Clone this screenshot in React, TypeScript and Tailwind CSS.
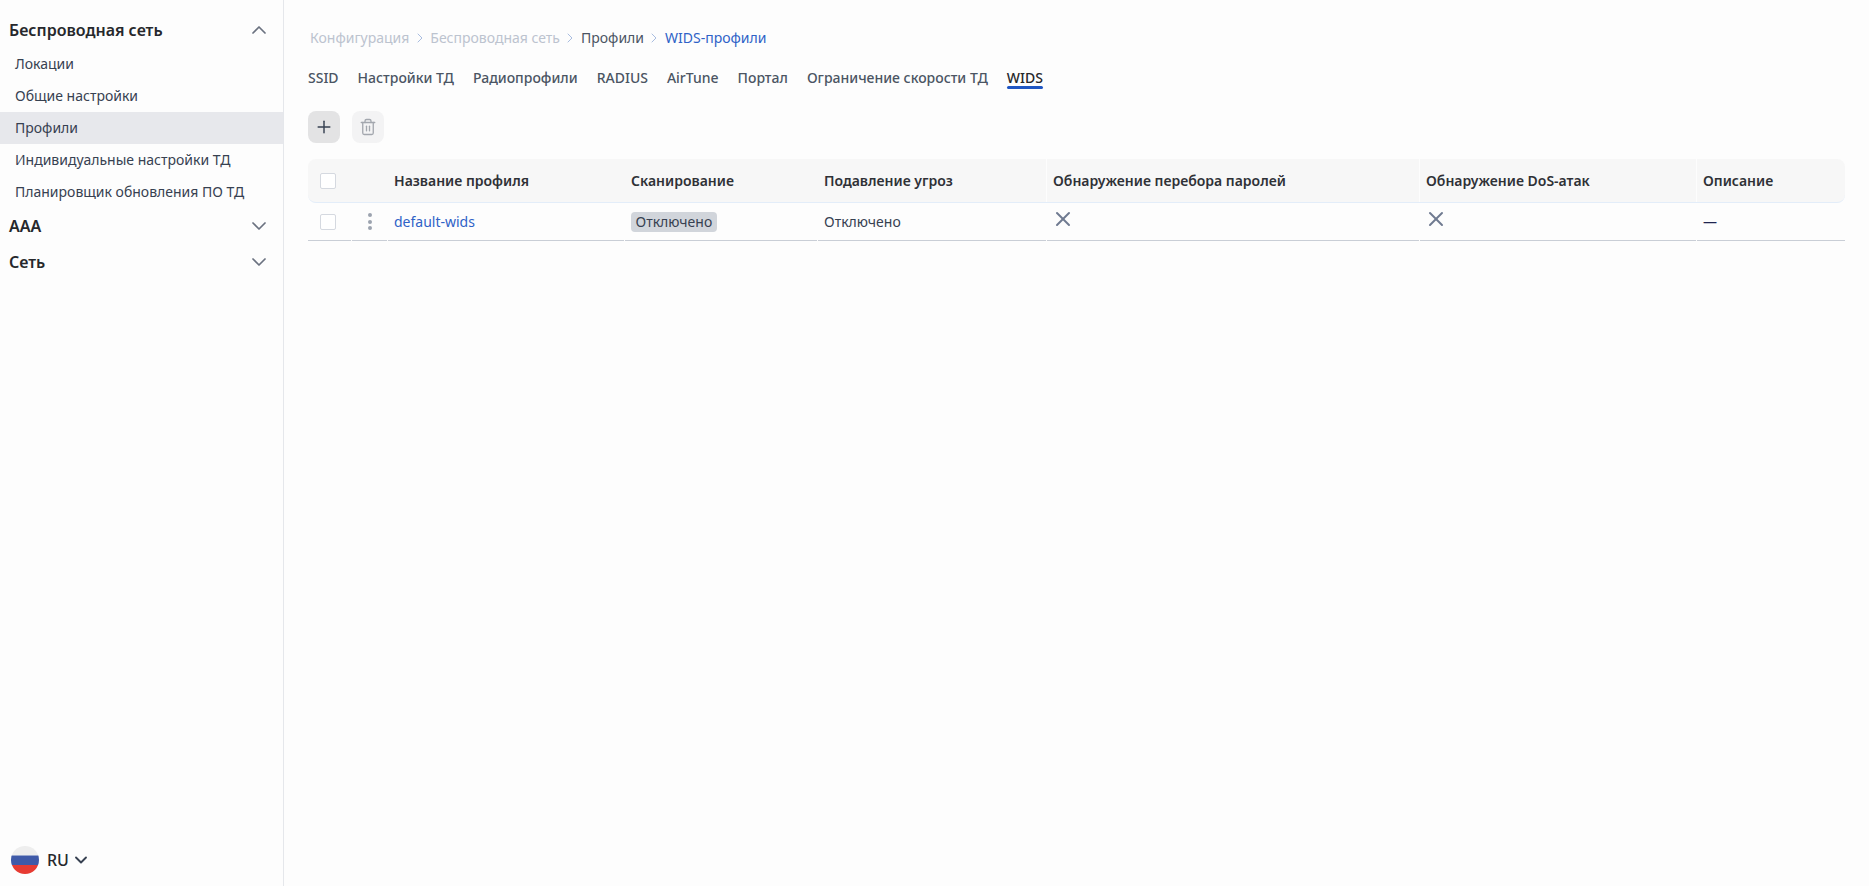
import { ChevronDown, ChevronUp, ChevronRight, Plus, Trash2, X } from "lucide-react";

const font = { fontFamily: '"Noto Sans", sans-serif' };

const items = ["Локации", "Общие настройки", "Профили", "Индивидуальные настройки ТД", "Планировщик обновления ПО ТД"];
const tabs = ["SSID", "Настройки ТД", "Радиопрофили", "RADIUS", "AirTune", "Портал", "Ограничение скорости ТД"];
const cols = "grid grid-cols-[43px_36px_237px_193px_229px_373px_277px_149px]";

function Check() {
  return <span className="block w-4 h-4 rounded-[2px] border border-[#d5d9e0] bg-white" />;
}

function Head({ children, first }: { children?: React.ReactNode; first?: boolean }) {
  return (
    <div className={`flex items-center text-sm font-semibold text-[#2f3136] ${first ? "pl-[7px]" : "pl-[6px] border-l border-[#fdfdfd]"}`}>
      {children}
    </div>
  );
}

function Cell({ children, first }: { children?: React.ReactNode; first?: boolean }) {
  return (
    <div className={`flex items-center text-sm text-[#374151] border-b border-[#c9ced6] ${first ? "pl-[7px]" : "ml-px pl-[6px]"}`}>
      {children}
    </div>
  );
}

function Group({ title, open }: { title: string; open?: boolean }) {
  const Icon = open ? ChevronUp : ChevronDown;
  return (
    <div className="h-9 pl-[9px] pr-3 flex items-center justify-between">
      <span className="text-base font-semibold text-[#26282c]">{title}</span>
      <Icon className="w-6 h-6 text-[#6b7280]" strokeWidth={1.75} />
    </div>
  );
}

function Sep() {
  return <ChevronRight className="w-4 h-4 mx-[2.5px] text-[#a9bde0]" strokeWidth={1.5} />;
}

function Dot() {
  return <span className="w-1 h-1 rounded-full bg-[#9ca3af] block" />;
}

function Cross() {
  return <X className="w-6 h-6 -mt-[5px] -ml-[2px] text-[#6f7a90]" strokeWidth={2} />;
}

export default function App() {
  return (
    <div style={font} className="flex h-[886px] bg-[#fdfdfd]">
      <aside className="w-[284px] shrink-0 border-r border-[#e5e7eb] pt-3 flex flex-col justify-between">
        <div>
          <Group title="Беспроводная сеть" open />
          {items.map((t) => (
            <div
              key={t}
              className={`h-8 pl-[15px] flex items-center text-sm text-[#374151] ${t === "Профили" ? "bg-[#e7e8ec]" : ""}`}
            >
              {t}
            </div>
          ))}
          <Group title="AAA" />
          <Group title="Сеть" />
        </div>
        <div className="flex items-center pl-[11px] pb-[11px] h-[42px] gap-2">
          <svg width="28" height="28" viewBox="0 0 28 28" className="shrink-0">
            <defs>
              <clipPath id="flag">
                <circle cx="14" cy="14" r="14" />
              </clipPath>
            </defs>
            <g clipPath="url(#flag)">
              <rect width="28" height="9.5" fill="#eeeeee" />
              <rect y="9.5" width="28" height="9.5" fill="#3f5aa8" />
              <rect y="19" width="28" height="9" fill="#e73b32" />
            </g>
          </svg>
          <span className="text-base font-medium text-[#26282c]">RU</span>
          <ChevronDown className="w-5 h-5 -ml-[6px] text-[#374151]" strokeWidth={2.25} />
        </div>
      </aside>
      <main className="flex-1 pl-6 pr-6 pt-[28px]">
        <nav className="flex items-center h-5 pl-[2px] text-sm">
          <span className="text-[#bcc3cf]">Конфигурация</span>
          <Sep />
          <span className="text-[#bcc3cf]">Беспроводная сеть</span>
          <Sep />
          <span className="text-[#4b5563]">Профили</span>
          <Sep />
          <span className="text-[#2f62c7]">WIDS-профили</span>
        </nav>
        <div className="flex gap-[19px] mt-[20px] h-5 items-center text-sm font-medium text-[#4b5563]">
          {tabs.map((t) => (
            <span key={t}>{t}</span>
          ))}
          <span className="relative text-[#26282c]">
            WIDS
            <span className="absolute left-0 right-0 -bottom-[1px] h-[3px] rounded-full bg-[#1f56c3]" />
          </span>
        </div>
        <div className="flex gap-3 mt-[23px]">
          <button className="w-8 h-8 rounded-lg bg-[#e3e3e4] flex items-center justify-center text-[#374151]">
            <Plus className="w-5 h-5" strokeWidth={1.75} />
          </button>
          <button className="w-8 h-8 rounded-lg bg-[#f3f3f4] flex items-center justify-center text-[#a3a7ae]">
            <Trash2 className="w-[18px] h-[18px]" strokeWidth={1.75} />
          </button>
        </div>
        <div className="mt-4">
          <div className={`${cols} h-[44px] bg-[#f7f7f7] rounded-t-lg rounded-b-lg border-b border-[#e3edf9]`}>
            <Head first>
              <div className="pl-[5px]"><Check /></div>
            </Head>
            <Head first />
            <Head first>Название профиля</Head>
            <Head first>Сканирование</Head>
            <Head first>Подавление угроз</Head>
            <Head>Обнаружение перебора паролей</Head>
            <Head>Обнаружение DoS-атак</Head>
            <Head>Описание</Head>
          </div>
          <div className={`${cols} h-[38px]`}>
            <Cell first>
              <div className="pl-[5px]"><Check /></div>
            </Cell>
            <Cell>
              <span className="flex flex-col gap-[2.3px] ml-[10px]">
                <Dot />
                <Dot />
                <Dot />
              </span>
            </Cell>
            <Cell>
              <span className="text-[#2f62c7]">default-wids</span>
            </Cell>
            <Cell>
              <span className="px-[4.5px] h-5 flex items-center rounded bg-[#d1d5db] text-[#374151]">Отключено</span>
            </Cell>
            <Cell>Отключено</Cell>
            <Cell>
              <Cross />
            </Cell>
            <Cell>
              <Cross />
            </Cell>
            <Cell>
              <span className="text-[#1f2450]">—</span>
            </Cell>
          </div>
        </div>
      </main>
    </div>
  );
}
